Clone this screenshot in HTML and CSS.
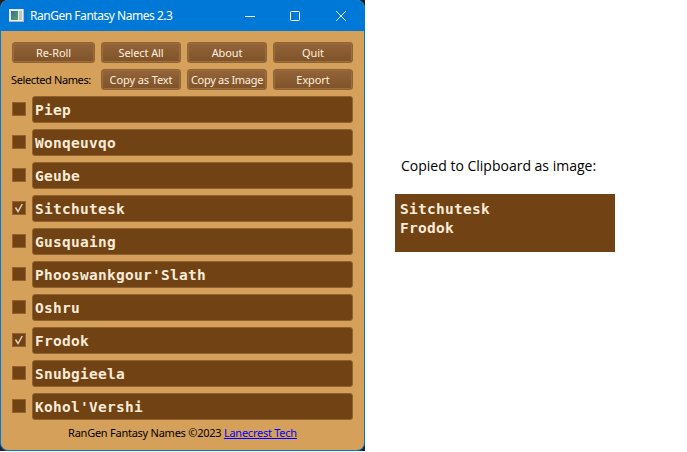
FILE: index.html
```html
<!DOCTYPE html>
<html lang="en">
<head>
<meta charset="utf-8">
<title>RanGen Fantasy Names 2.3</title>
<link rel="stylesheet" href="styles.css">
</head>
<body>
<main class="page">
  <div class="backdrop">
  <section class="window">
    <header class="titlebar">
      <svg class="app-icon" width="15" height="13" viewBox="0 0 15 13">
        <defs>
          <linearGradient id="pane" x1="0" y1="0" x2="1" y2="1"><stop offset="0" stop-color="#3c6c96"/><stop offset="1" stop-color="#55a567"/></linearGradient>
        </defs>
        <rect width="15" height="13" fill="#e9ecec"/>
        <rect x="2" y="2" width="7" height="9" fill="url(#pane)"/>
        <rect x="10" y="2" width="3" height="9" fill="#b9c8cb"/>
        <path d="M0 12.5H15M14.5 0V13" stroke="#b5b9bd"/>
      </svg>
      <h1 class="title">RanGen Fantasy Names 2.3</h1>
      <svg class="controls" width="104" height="12" viewBox="0 0 104 12" fill="none" stroke="#fff">
        <path d="M0 6.5H10"/>
        <rect x="45.5" y="1.5" width="9" height="9" rx="1"/>
        <path d="M91.2 1.2L100.8 10.8M100.8 1.2L91.2 10.8"/>
      </svg>
    </header>
    <div class="content">
      <div class="toolbar">
        <button class="btn">Re-Roll</button>
        <button class="btn">Select All</button>
        <button class="btn">About</button>
        <button class="btn">Quit</button>
        <span class="label">Selected Names:</span>
        <button class="btn">Copy as Text</button>
        <button class="btn tight">Copy as Image</button>
        <button class="btn">Export</button>
      </div>
      <ul class="names">
        <li class="row"><span class="check"></span><span class="field">Piep</span></li>
        <li class="row"><span class="check"></span><span class="field">Wonqeuvqo</span></li>
        <li class="row"><span class="check"></span><span class="field">Geube</span></li>
        <li class="row"><span class="check"><svg width="12" height="12" viewBox="0 0 12 12"><path class="tick" d="M2.5 5.5L5 9.5L9.3 2"/></svg></span><span class="field">Sitchutesk</span></li>
        <li class="row"><span class="check"></span><span class="field">Gusquaing</span></li>
        <li class="row"><span class="check"></span><span class="field">Phooswankgour'Slath</span></li>
        <li class="row"><span class="check"></span><span class="field">Oshru</span></li>
        <li class="row"><span class="check"><svg width="12" height="12" viewBox="0 0 12 12"><path class="tick" d="M2.5 5.5L5 9.5L9.3 2"/></svg></span><span class="field">Frodok</span></li>
        <li class="row"><span class="check"></span><span class="field">Snubgieela</span></li>
        <li class="row"><span class="check"></span><span class="field">Kohol'Vershi</span></li>
      </ul>
      <footer class="footer">RanGen Fantasy Names ©2023 <a href="#">Lanecrest Tech</a></footer>
    </div>
  </section>
  </div>
  <aside class="clipboard">
    <p class="caption">Copied to Clipboard as image:</p>
    <div class="copied">Sitchutesk<br>Frodok</div>
  </aside>
</main>
</body>
</html>
```
FILE: styles.css
```css
* { box-sizing: border-box; }
body { margin: 0; background: #fff; overflow: hidden; }
.page { display: flex; align-items: flex-start; width: 687px; height: 452px; font-family: "Noto Sans", sans-serif; }
.backdrop { width: 365px; height: 451px; background: #202020; }
.window {
  height: 451px;
  border: 1px solid #0078d7;
  border-top: 0;
  border-radius: 8px;
  overflow: hidden;
  background: #d5a059;
}
.titlebar { display: flex; align-items: center; height: 31px; padding: 0 15px 0 8px; background: #0078d7; }
.app-icon { flex: none; }
.title { margin: 0 0 0 6px; font-size: 12px; font-weight: 400; line-height: 20px; letter-spacing: -0.47px; color: #fff; white-space: nowrap; }
.controls { margin-left: auto; flex: none; }
.content { padding: 11px 11px 0; }
.toolbar { display: grid; grid-template-columns: 83px 80px 80px 80px; gap: 6px; }
.btn {
  height: 21px;
  padding: 0;
  border: 1px solid #8f6335;
  border-radius: 3px;
  background: linear-gradient(#94643a, #7f5227);
  box-shadow: inset 0 0 0 1px #9b6e40;
  font: 11px/19px "Noto Sans", sans-serif;
  letter-spacing: -0.1px;
  color: #fdefdf;
  white-space: nowrap;
}
.btn.tight { letter-spacing: -0.3px; }
.label { margin-left: -1px; font-size: 11px; line-height: 21px; letter-spacing: -0.38px; white-space: nowrap; color: #000; }
.names { display: grid; gap: 5px; margin: 6px 0 0; padding: 0; list-style: none; }
.row { display: flex; align-items: flex-start; gap: 6px; height: 28px; }
.check { display: flex; flex: none; width: 14px; height: 14px; margin-top: 6px; border: 1px solid #946330; background: #704214; }
.tick { fill: none; stroke: #e3cdb8; stroke-width: 1.5; }
.field, .copied { font-family: "DejaVu Sans Mono", monospace; font-weight: 700; font-size: 14.5px; letter-spacing: 0.27px; color: #faebd7; background: #704214; }
.field { flex: 1; height: 27px; padding-left: 2px; border: 1px solid #8f622f; border-radius: 3px; line-height: 26px; }
.footer { margin-top: 2px; text-align: center; font-size: 11px; line-height: 20px; letter-spacing: -0.25px; color: #000; }
.footer a { color: #00f; }
.clipboard { padding: 156px 0 0 30px; }
.caption { margin: 0 0 18px 6px; font-family: "Open Sans", sans-serif; font-size: 14px; line-height: 20px; color: #000; white-space: nowrap; }
.copied { width: 220px; height: 58px; padding: 6px 5px; line-height: 19px; }
```
